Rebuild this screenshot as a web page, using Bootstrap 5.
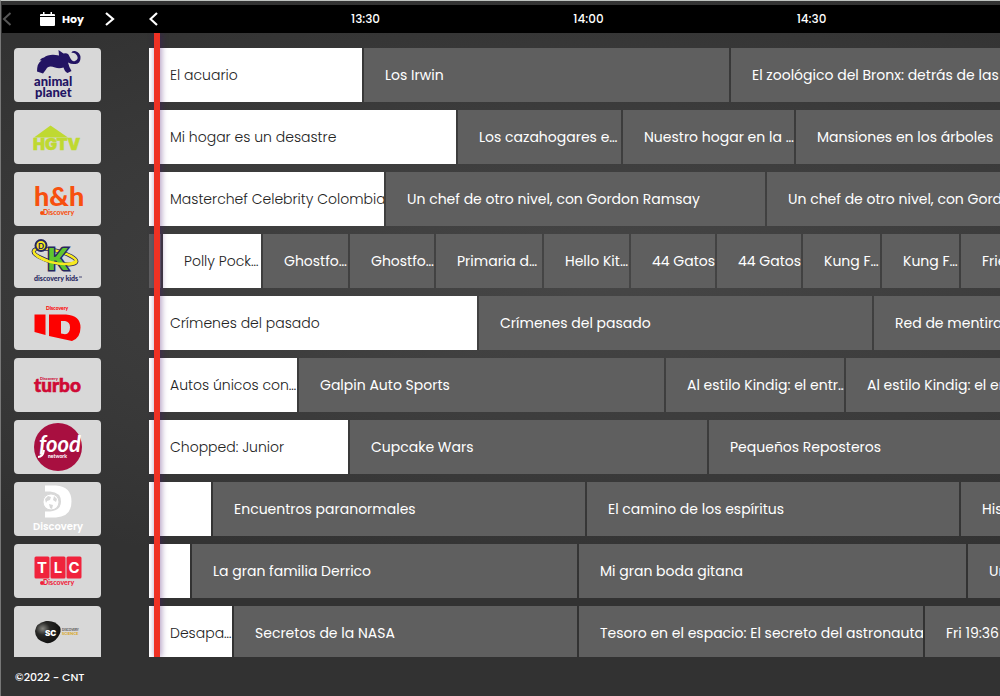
<!DOCTYPE html>
<html lang="es">
<head>
<meta charset="utf-8">
<meta name="viewport" content="width=device-width, initial-scale=1">
<title>Guía de programación</title>
<link href="https://cdn.jsdelivr.net/npm/bootstrap@5.3.0/dist/css/bootstrap.min.css" rel="stylesheet">
<style>
:root { --side: 148px; --line: #ef3124; }
body {
  font-family: Poppins, Inter, "Open Sans", sans-serif;
  font-size: 14px; line-height: 20px; color: #fff;
  background: radial-gradient(ellipse 90% 45% at 60% 40%, #464646, #323232) #323232;
  border-top: 1px solid #c0c4c1; border-left: 1px solid #777;
}
.topbar { margin: 4px 0 0 1px; height: 28px; background: #000; font-size: 12px; }
.daypick { width: calc(var(--side) - 1px); }
.today { margin-left: 28px; gap: 7px; font-size: 11px; font-weight: 700; }
.arrow { background: none; border: 0; padding: 0; color: #fff; line-height: 0; }
.arrow:disabled { color: #555; }
.slot { flex: 0 0 223px; text-align: center; font-weight: 500; }
.slots { padding-left: 96px; }
.guide { padding-top: 15px; }
.lane { height: 54px; margin-bottom: 8px; }
.side { flex: 0 0 var(--side); padding-left: 13px; }
.logo { display: block; width: 87px; height: 54px; border-radius: 4px; background: #d8d8d8; font-family: Lato, sans-serif; font-weight: 900; }
.prog {
  flex: 0 0 auto; display: flex; align-items: center; min-width: 0; overflow: hidden; white-space: nowrap;
  padding-left: 21px; background: #5f5f5f; background-clip: padding-box;
  border-right: 2px solid transparent; font-weight: 400; color: #fff; text-decoration: none;
}
.prog.rest { flex: 1 1 0; border-right: 0; }
.prog.live { background-color: #fff; color: #222; font-weight: 300; }
.prog.past { padding-left: 0; }
.nowline { position: absolute; top: 0; bottom: 0; left: calc(var(--side) + 5px); width: 6px; background: var(--line); box-shadow: 1px 0 6px rgba(70, 20, 110, .5); }
.foot { padding: 10px 14px 9px; font-size: 11px; font-weight: 500; }
</style>
</head>
<body class="d-flex flex-column vh-100 overflow-hidden">

<header class="topbar d-flex align-items-center flex-shrink-0">
  <div class="daypick d-flex align-items-center flex-shrink-0">
    <button class="arrow" disabled aria-label="Día anterior"><svg width="10" height="14" viewBox="0 0 10 14" fill="none" stroke="currentColor" stroke-width="2"><path d="M8.500 1 2 7l6.500 6"/></svg></button>
    <span class="today d-flex align-items-center">
      <svg width="15" height="14" viewBox="0 0 15 14" fill="#fff"><path d="M0 5h15v8q0 1-1 1H1q-1 0-1-1zM0 4V3q0-1 1-1h2V0h1.500v2h6V0H12v2h2q1 0 1 1v1z"/></svg>
      Hoy</span>
    <button class="arrow ms-3 ps-1" aria-label="Día siguiente"><svg width="12" height="14" viewBox="0 0 12 14" fill="none" stroke="currentColor" stroke-width="2.200"><path d="m2 1 7 6-7 6"/></svg></button>
  </div>
  <button class="arrow" aria-label="Horas anteriores"><svg width="9" height="14" viewBox="0 0 9 14" fill="none" stroke="currentColor" stroke-width="2.200"><path d="M8 1 1.500 7 8 13"/></svg></button>
  <div class="slots d-flex flex-grow-1 overflow-hidden">
    <time class="slot">13:30</time><time class="slot">14:00</time><time class="slot">14:30</time>
  </div>
</header>

<main class="guide position-relative flex-grow-1 overflow-hidden">

  <section class="lane d-flex">
    <div class="side"><svg class="logo" viewBox="0 0 87 54" fill="#231463" role="img" aria-label="Animal Planet">
      <path d="M23 23.500Q23 15 27.500 12.500q-1-.5-2 .5 1-3 4.500-3.500Q35 5.500 45 7.500L44.500 2l5 3.500q3-1 5 1l1.500 3q2 4.500 5 3.500 4-2 2-5.500Q61 4 57.500 5q0-2.500 3.500-2 5.500 1.500 5.500 7 0 5.500-5 6-4 .5-7.500-1.500 1 4.500 3.500 8.500l-4 2Q51 24 49.500 19.500 45 21 41 19.500q-7-2.500-9 2L29 25.500z"/>
      <text x="20" y="38" font-size="13">animal</text><text x="21" y="49" font-size="13">planet</text></svg></div>
    <a href="#" class="prog live" style="width:215px">El acuario</a>
    <a href="#" class="prog" style="width:367px">Los Irwin</a>
    <a href="#" class="prog rest">El zoológico del Bronx: detrás de las cámaras</a>
  </section>

  <section class="lane d-flex">
    <div class="side"><svg class="logo" viewBox="0 0 87 54" fill="#bfd931" role="img" aria-label="HGTV">
      <path d="m20 27.500 16.500-12 17.500 12z"/><text x="19" y="40" font-size="16" font-family="Inter" stroke="#bfd931" stroke-width=".6">HGTV</text></svg></div>
    <a href="#" class="prog live" style="width:309px">Mi hogar es un desastre</a>
    <a href="#" class="prog" style="width:165px">Los cazahogares e…</a>
    <a href="#" class="prog" style="width:173px">Nuestro hogar en la …</a>
    <a href="#" class="prog rest">Mansiones en los árboles</a>
  </section>

  <section class="lane d-flex">
    <div class="side"><svg class="logo" viewBox="0 0 87 54" fill="#f7500f" role="img" aria-label="Discovery Home &amp; Health">
      <text x="20" y="34" font-size="27">h&amp;h</text><circle cx="28" cy="41" r="2"/><text x="29" y="43" font-size="7">Discovery</text></svg></div>
    <a href="#" class="prog live" style="width:237px">Masterchef Celebrity Colombia</a>
    <a href="#" class="prog" style="width:381px">Un chef de otro nivel, con Gordon Ramsay</a>
    <a href="#" class="prog rest">Un chef de otro nivel, con Gordon Ramsay</a>
  </section>

  <section class="lane d-flex">
    <div class="side"><svg class="logo" viewBox="0 0 87 54" role="img" aria-label="Discovery Kids">
      <ellipse cx="41" cy="22.500" rx="22" ry="6" transform="rotate(14 41 22.500)" fill="none" stroke="#26265e" stroke-width="4"/>
      <ellipse cx="41" cy="22.500" rx="22" ry="6" transform="rotate(14 41 22.500)" fill="none" stroke="#f7e921" stroke-width="2.500"/>
      <text x="33" y="36" font-size="30" fill="#5fc52e" stroke="#26265e" stroke-width="3" paint-order="stroke">K</text>
      <path d="M20 19q7 8 24 10.500 14 1.500 18-2.500" fill="none" stroke="#f7e921" stroke-width="2.500"/>
      <circle cx="27" cy="11.500" r="5.500" fill="#f7e921" stroke="#26265e" stroke-width="2"/><text x="27" y="14.500" font-size="8" text-anchor="middle" fill="#26265e">D</text>
      <text x="20" y="47" font-size="7" fill="#26265e">discovery kids</text><path d="M65 43h3" stroke="#26265e" stroke-width=".8"/></svg></div>
    <a href="#" class="prog past" style="width:14px" aria-label="Programa anterior"></a>
    <a href="#" class="prog live" style="width:100px">Polly Pock…</a>
    <a href="#" class="prog" style="width:87px">Ghostfo…</a>
    <a href="#" class="prog" style="width:86px">Ghostfo…</a>
    <a href="#" class="prog" style="width:108px">Primaria d…</a>
    <a href="#" class="prog" style="width:87px">Hello Kit…</a>
    <a href="#" class="prog" style="width:86px">44 Gatos</a>
    <a href="#" class="prog" style="width:86px">44 Gatos</a>
    <a href="#" class="prog" style="width:79px">Kung F…</a>
    <a href="#" class="prog" style="width:79px">Kung F…</a>
    <a href="#" class="prog rest">Friends</a>
  </section>

  <section class="lane d-flex">
    <div class="side"><svg class="logo" viewBox="0 0 87 54" fill="#fd0100" role="img" aria-label="Investigation Discovery">
      <text x="32" y="14" font-size="5">Discovery</text>
      <path d="M20.500 18.500h11V39l-11-3zM35 18.500h17q14.500 1 14.500 13Q66.500 42 58 45l-23-5zM47 25v12.500l4 .8q5-.5 5-7 0-5.500-5-6.300z" fill-rule="evenodd"/></svg></div>
    <a href="#" class="prog live" style="width:330px">Crímenes del pasado</a>
    <a href="#" class="prog" style="width:395px">Crímenes del pasado</a>
    <a href="#" class="prog rest">Red de mentiras</a>
  </section>

  <section class="lane d-flex">
    <div class="side"><svg class="logo" viewBox="0 0 87 54" fill="#cf0a35" role="img" aria-label="Discovery Turbo">
      <text x="20" y="34" font-size="19" stroke="#cf0a35" stroke-width=".6">turbo</text><text x="26" y="22" font-size="4">Discovery</text></svg></div>
    <a href="#" class="prog live" style="width:150px">Autos únicos con…</a>
    <a href="#" class="prog" style="width:367px">Galpin Auto Sports</a>
    <a href="#" class="prog" style="width:180px">Al estilo Kindig: el entr…</a>
    <a href="#" class="prog rest">Al estilo Kindig: el entrenamiento</a>
  </section>

  <section class="lane d-flex">
    <div class="side"><svg class="logo" viewBox="0 0 87 54" fill="#fff" role="img" aria-label="Food Network">
      <circle cx="44" cy="27" r="24" fill="#a80f40"/><text x="25" y="32" font-size="22" font-style="italic" font-weight="700">food</text>
      <path d="M30 30q-1 7-6 7" fill="none" stroke="#fff" stroke-width="2"/><text x="34" y="38" font-size="5">network</text></svg></div>
    <a href="#" class="prog live" style="width:201px">Chopped: Junior</a>
    <a href="#" class="prog" style="width:359px">Cupcake Wars</a>
    <a href="#" class="prog rest">Pequeños Reposteros</a>
  </section>

  <section class="lane d-flex">
    <div class="side"><svg class="logo" viewBox="0 0 87 54" fill="#fff" role="img" aria-label="Discovery">
      <path d="M31 3.500h11q15.500 1 15.500 16T42 35.500H31v-6h5q11-1 11-10t-11-10h-5z"/><circle cx="37" cy="20" r="8" stroke="#d8d8d8"/>
      <path d="m31 17 3-3 3 1-1 3-3 1-1 2zM40 14l3 3-1 3-3-2zM35 22l4 1-1 4-2-1z" fill="#d8d8d8"/>
      <text x="19" y="48" font-size="10" font-family="Poppins" font-weight="600">Discovery</text></svg></div>
    <a href="#" class="prog live" style="width:64px" aria-label="En emisión"></a>
    <a href="#" class="prog" style="width:374px">Encuentros paranormales</a>
    <a href="#" class="prog" style="width:374px">El camino de los espíritus</a>
    <a href="#" class="prog rest">Historias</a>
  </section>

  <section class="lane d-flex">
    <div class="side"><svg class="logo" viewBox="0 0 87 54" fill="#f0233c" role="img" aria-label="TLC">
      <rect x="20.500" y="12.500" width="15" height="22" rx="1.500"/><rect x="36.500" y="12.500" width="15" height="22" rx="1.500"/><rect x="52.500" y="12.500" width="15" height="22" rx="1.500"/>
      <g fill="#fff" font-size="15" font-family="Inter" font-weight="700" text-anchor="middle"><text x="28" y="29">T</text><text x="44" y="29">L</text><text x="60" y="29">C</text></g>
      <circle cx="28" cy="39" r="2"/><text x="29" y="41" font-size="7">Discovery</text></svg></div>
    <a href="#" class="prog live" style="width:43px" aria-label="En emisión"></a>
    <a href="#" class="prog" style="width:387px">La gran familia Derrico</a>
    <a href="#" class="prog" style="width:389px">Mi gran boda gitana</a>
    <a href="#" class="prog rest">Una boda</a>
  </section>

  <section class="lane d-flex">
    <div class="side"><svg class="logo" viewBox="0 0 87 54" role="img" aria-label="Discovery Science">
      <defs><radialGradient id="stone" cx=".3" cy=".35" r=".7"><stop offset="0" stop-color="#858580"/><stop offset=".4" stop-color="#282826"/><stop offset="1" stop-color="#111"/></radialGradient></defs>
      <path d="M21 25q1-8 11-10 9-1 14 6 2 4-2 10-5 7-12 6-11-3-11-12z" fill="url(#stone)"/>
      <text x="31" y="30" font-size="8" fill="#fff" font-family="Inter">SC</text>
      <text x="48" y="25" font-size="3" fill="#555">DISCOVERY</text><text x="48" y="29" font-size="4" fill="#d9a92a">SCIENCE</text></svg></div>
    <a href="#" class="prog live" style="width:85px">Desapa…</a>
    <a href="#" class="prog" style="width:345px">Secretos de la NASA</a>
    <a href="#" class="prog" style="width:346px">Tesoro en el espacio: El secreto del astronauta</a>
    <a href="#" class="prog rest">Fri 19:36</a>
  </section>

  <div class="nowline"></div>
</main>

<footer class="foot flex-shrink-0">©2022 - CNT</footer>
<script src="https://cdn.jsdelivr.net/npm/bootstrap@5.3.0/dist/js/bootstrap.bundle.min.js"></script>
</body>
</html>
